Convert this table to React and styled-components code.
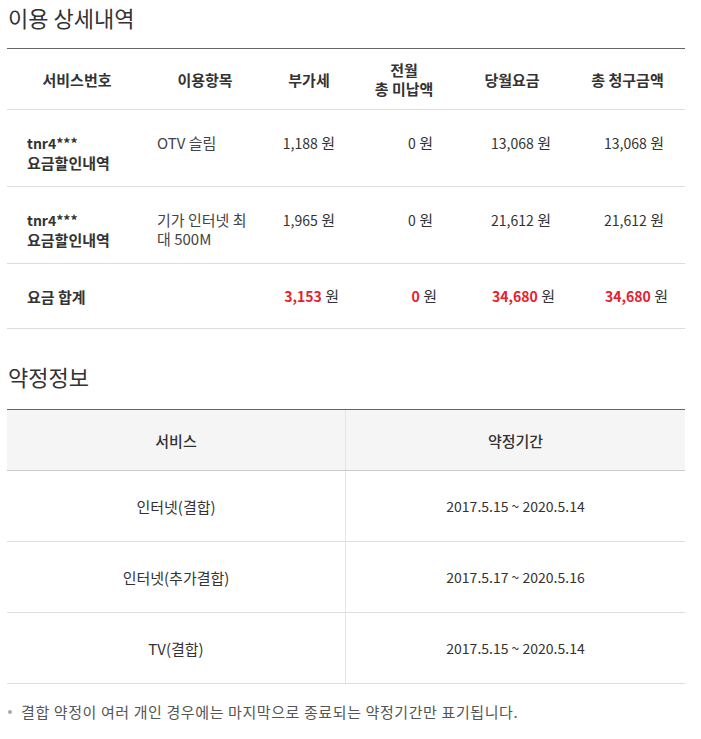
import React from 'react'
import styled, { createGlobalStyle } from 'styled-components'

const GlobalStyle = createGlobalStyle`
  body {
    margin: 0;
    background: #fff;
    font-family: "Noto Sans CJK KR", "Noto Sans", sans-serif;
    color: #333;
  }
`

const usage = [
  { id: 'tnr4***', label: '요금할인내역', item: 'OTV 슬림', vat: '1,188', unpaid: '0', month: '13,068', total: '13,068' },
  { id: 'tnr4***', label: '요금할인내역', item: '기가 인터넷 최대 500M', vat: '1,965', unpaid: '0', month: '21,612', total: '21,612' },
]

const contracts = [
  { service: '인터넷(결합)', period: '2017.5.15 ~ 2020.5.14' },
  { service: '인터넷(추가결합)', period: '2017.5.17 ~ 2020.5.16' },
  { service: 'TV(결합)', period: '2017.5.15 ~ 2020.5.14' },
]

function Amount({ value, red, total }) {
  return (
    <AmountCell $total={total}>
      <AmountNum $red={red}>{value}</AmountNum> 원
    </AmountCell>
  )
}

function App() {
  return (
    <PageSt>
      <GlobalStyle />
      <TitleSt>이용 상세내역</TitleSt>
      <UsageTable>
        <UsageRow $head>
          <HeadCell>서비스번호</HeadCell>
          <HeadCell>이용항목</HeadCell>
          <HeadCell>부가세</HeadCell>
          <HeadCell>전월<br />총 미납액</HeadCell>
          <HeadCell>당월요금</HeadCell>
          <HeadCell>총 청구금액</HeadCell>
        </UsageRow>
        {usage.map((r, i) => (
          <UsageRow key={i}>
            <IdCell>
              <IdCode>{r.id}</IdCode>
              <br />
              {r.label}
            </IdCell>
            <ItemCell>{r.item}</ItemCell>
            <Amount value={r.vat} />
            <Amount value={r.unpaid} />
            <Amount value={r.month} />
            <Amount value={r.total} />
          </UsageRow>
        ))}
        <UsageRow $sum>
          <IdCell>요금 합계</IdCell>
          <ItemCell />
          <Amount value="3,153" red total />
          <Amount value="0" red total />
          <Amount value="34,680" red total />
          <Amount value="34,680" red total />
        </UsageRow>
      </UsageTable>

      <TitleSt $second>약정정보</TitleSt>
      <ContractTable>
        <ContractRow $head>
          <ContractCell $head>서비스</ContractCell>
          <ContractCell $head>약정기간</ContractCell>
        </ContractRow>
        {contracts.map((c, i) => (
          <ContractRow key={i}>
            <ContractCell>{c.service}</ContractCell>
            <ContractCell $num>{c.period}</ContractCell>
          </ContractRow>
        ))}
      </ContractTable>

      <NoteSt>
        <DotSt />
        결합 약정이 여러 개인 경우에는 마지막으로 종료되는 약정기간만 표기됩니다.
      </NoteSt>
    </PageSt>
  )
}

const PageSt = styled.div`
  width: 678px;
  padding: 0 0 0 7px;
`

const TitleSt = styled.h2`
  margin: ${p => (p.$second ? '32px 0 18px' : '0 0 16px')};
  padding-top: ${p => (p.$second ? '0' : '2px')};
  padding-left: 1px;
  font-size: 22px;
  font-weight: 400;
  line-height: 30px;
  color: #333;
`

const UsageTable = styled.div`
  border-top: 1px solid #666;
`

const UsageRow = styled.div`
  display: grid;
  grid-template-columns: 140px 116px 92px 98px 118px 113px;
  box-sizing: content-box;
  height: ${p => (p.$head ? '60px' : p.$sum ? '64px' : '53px')};
  padding-top: ${p => (p.$head || p.$sum ? '0' : '23px')};
  align-items: ${p => (p.$head || p.$sum ? 'center' : 'start')};
  border-bottom: 1px solid #ddd;
  font-size: 15px;
  line-height: 19px;
`

const HeadCell = styled.div`
  text-align: center;
  font-weight: 700;
  line-height: 19px;
  color: #333;
`

const IdCell = styled.div`
  padding-left: 20px;
  font-weight: 700;
  color: #333;
`

const IdCode = styled.span`
  font-size: 14px;
`

const ItemCell = styled.div`
  padding: 0 5px 0 10px;
  word-break: break-all;
  color: #444;
`

const AmountCell = styled.div`
  text-align: right;
  padding-right: ${p => (p.$total ? '16px' : '20px')};
  color: #333;
  white-space: nowrap;
`

const AmountNum = styled.span`
  font-size: 14px;
  color: ${p => (p.$red ? '#e8202c' : '#333')};
  font-weight: ${p => (p.$red ? 700 : 400)};
`

const ContractTable = styled.div`
  border-top: 1px solid #666;
`

const ContractRow = styled.div`
  display: grid;
  grid-template-columns: 339px 339px;
  height: ${p => (p.$head ? '60px' : '70px')};
  background: ${p => (p.$head ? '#f5f5f5' : '#fff')};
  border-bottom: 1px solid ${p => (p.$head ? '#ccc' : '#ddd')};
`

const ContractCell = styled.div`
  display: flex;
  align-items: center;
  justify-content: center;
  font-size: ${p => (p.$num ? '14px' : '15px')};
  font-weight: ${p => (p.$head ? 500 : 400)};
  color: #333;
  &:first-child {
    border-right: 1px solid #e5e5e5;
  }
`

const NoteSt = styled.p`
  display: flex;
  align-items: center;
  gap: 9px;
  margin: 18px 0 0;
  padding-left: 1px;
  font-size: 15px;
  letter-spacing: 0.6px;
  line-height: 20px;
  color: #555;
`

const DotSt = styled.span`
  flex: none;
  width: 4px;
  height: 4px;
  border-radius: 50%;
  background: #aaa;
`

export default App
